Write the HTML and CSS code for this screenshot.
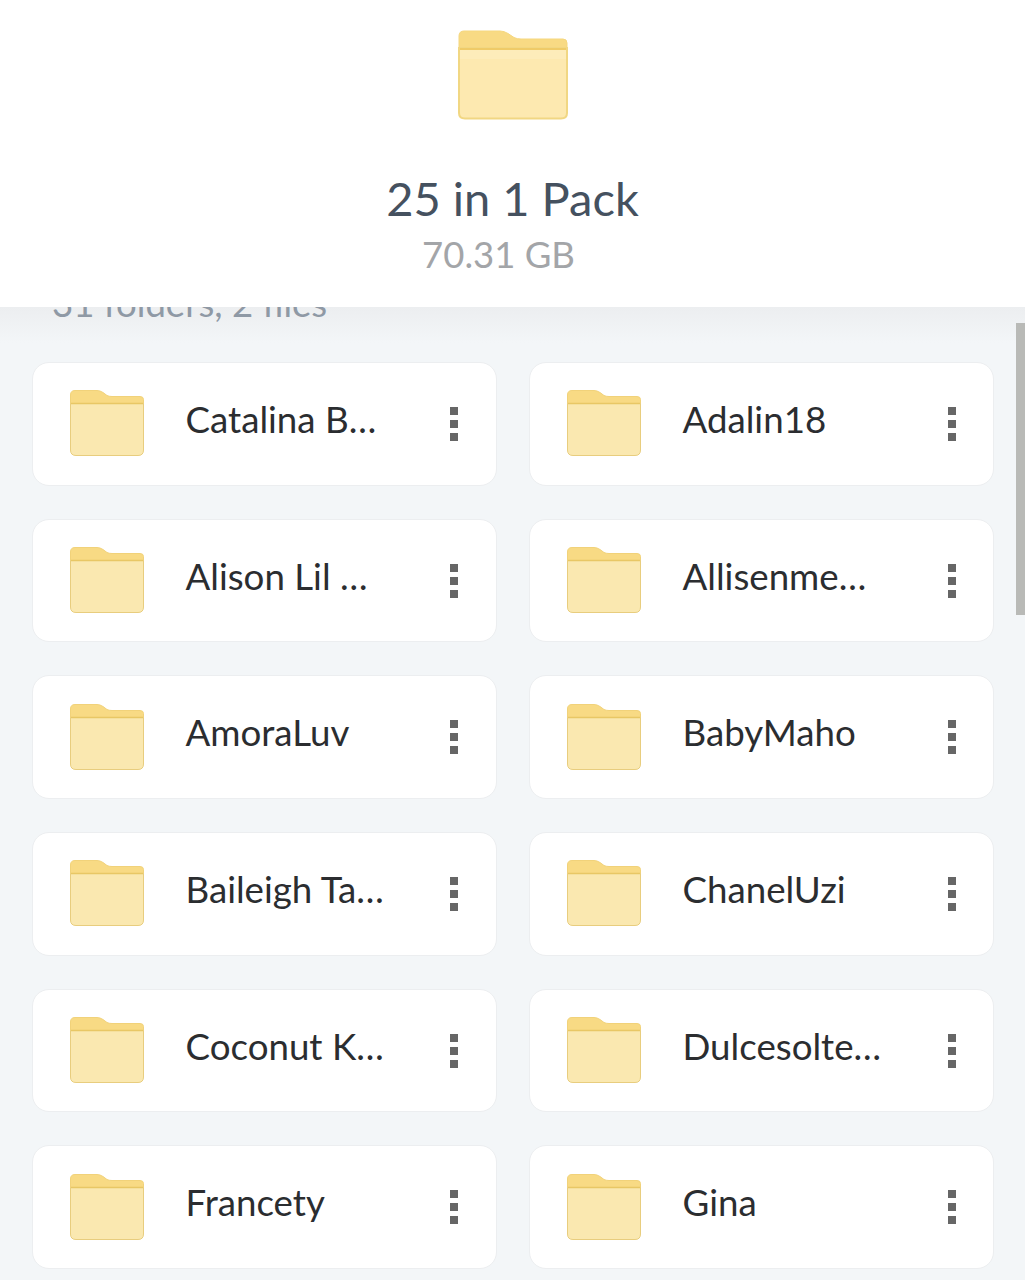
FILE: index.html
```html
<!DOCTYPE html>
<html lang="en">
<head>
<meta charset="utf-8">
<title>25 in 1 Pack</title>
<link rel="stylesheet" href="styles.css">
</head>
<body>
<svg class="defs" width="0" height="0" aria-hidden="true">
  <symbol id="folder" viewBox="0 0 74 66">
    <path d="M.5 11V5Q.5.5 5 .5H27Q30 .5 33 2.500L37 5.500Q39 6.500 42 6.500H70Q73.500 6.500 73.500 9.500V14H.5Z" fill="#f8da84" stroke="#f1d27a"/>
    <path d="M.5 13.500H73.500V60Q73.500 65.500 68 65.500H6Q.5 65.500 .5 60Z" fill="#fae8b0" stroke="#e8cd7e"/>
    <path d="M1 13.500H73" stroke="#e8c765" stroke-width="1.500"/>
  </symbol>
  <symbol id="folder-large" viewBox="0 0 110 90">
    <path d="M1 18V6Q1 1 6 1H42Q46 1 50 3.500L56 7.500Q59 9 63 9H105Q109 9 109 13V19H1Z" fill="#f8da84" stroke="#f5d77f"/>
    <path d="M1 18H109V83Q109 88.500 103 88.500H7Q1 88.500 1 83Z" fill="#fde9b0" stroke="#f1d783" stroke-width="2"/>
    <path d="M2 24.500H108" stroke="#fdecba" stroke-width="9"/>
    <path d="M2 19H108" stroke="#efcb68" stroke-width="2"/>
  </symbol>
</svg>
<header class="header">
  <svg class="header-folder"><use href="#folder-large"/></svg>
  <h1 class="title">25 in 1 Pack</h1>
  <p class="size">70.31 GB</p>
</header>
<main class="content">
  <p class="count">31 folders, 2 files</p>
  <div class="grid">
    <div class="card"><svg class="folder"><use href="#folder"/></svg><span class="name">Catalina B…</span><span class="kebab"><i></i><i></i><i></i></span></div>
    <div class="card"><svg class="folder"><use href="#folder"/></svg><span class="name">Adalin18</span><span class="kebab"><i></i><i></i><i></i></span></div>
    <div class="card"><svg class="folder"><use href="#folder"/></svg><span class="name">Alison Lil …</span><span class="kebab"><i></i><i></i><i></i></span></div>
    <div class="card"><svg class="folder"><use href="#folder"/></svg><span class="name">Allisenme…</span><span class="kebab"><i></i><i></i><i></i></span></div>
    <div class="card"><svg class="folder"><use href="#folder"/></svg><span class="name">AmoraLuv</span><span class="kebab"><i></i><i></i><i></i></span></div>
    <div class="card"><svg class="folder"><use href="#folder"/></svg><span class="name">BabyMaho</span><span class="kebab"><i></i><i></i><i></i></span></div>
    <div class="card"><svg class="folder"><use href="#folder"/></svg><span class="name">Baileigh Ta…</span><span class="kebab"><i></i><i></i><i></i></span></div>
    <div class="card"><svg class="folder"><use href="#folder"/></svg><span class="name">ChanelUzi</span><span class="kebab"><i></i><i></i><i></i></span></div>
    <div class="card"><svg class="folder"><use href="#folder"/></svg><span class="name">Coconut K…</span><span class="kebab"><i></i><i></i><i></i></span></div>
    <div class="card"><svg class="folder"><use href="#folder"/></svg><span class="name">Dulcesolte…</span><span class="kebab"><i></i><i></i><i></i></span></div>
    <div class="card"><svg class="folder"><use href="#folder"/></svg><span class="name">Francety</span><span class="kebab"><i></i><i></i><i></i></span></div>
    <div class="card"><svg class="folder"><use href="#folder"/></svg><span class="name">Gina</span><span class="kebab"><i></i><i></i><i></i></span></div>
  </div>
</main>
<div class="scrollbar"></div>
</body>
</html>
```
FILE: styles.css
```css
* { box-sizing: border-box; }
html, body { margin: 0; height: 1280px; overflow: hidden; }
body {
  position: relative;
  background: #f3f6f8;
  font-family: Lato, "Open Sans", sans-serif;
}
.defs { position: absolute; }
.header {
  position: relative;
  z-index: 2;
  height: 307px;
  background: #fff;
  display: flex;
  flex-direction: column;
  align-items: center;
  padding-top: 30px;
}
.header-folder { width: 110px; height: 90px; }
.title {
  margin: 50px 0 0;
  font-size: 47px;
  line-height: 56px;
  font-weight: 400;
  color: #45515f;
}
.size {
  margin: 1px 28px 0 0;
  font-size: 36.500px;
  line-height: 54px;
  color: #a3a5a8;
}
.content {
  position: relative;
  background: linear-gradient(#e7e8ea 0, #f3f6f8 62px);
  height: 973px;
  padding: 0 31px 0 32px;
}
.count {
  margin: -26px 0 0 20px;
  height: 81px;
  font-size: 36.600px;
  line-height: 44px;
  color: #8f99a5;
}
.grid {
  display: grid;
  grid-template-columns: 464.500px 465px;
  column-gap: 32.500px;
  grid-auto-rows: 123.700px;
  row-gap: 33px;
}
.card {
  display: flex;
  align-items: center;
  background: #fff;
  border: 1.500px solid #eceef0;
  border-radius: 17px;
  padding-left: 37px;
}
.folder { width: 74px; height: 66px; flex: none; margin-top: -1px; }
.name {
  flex: 1;
  margin-left: 41.500px;
  margin-top: -10px;
  font-size: 36.700px;
  line-height: 44px;
  color: #2b2d30;
  white-space: nowrap;
}
.kebab {
  display: flex;
  flex-direction: column;
  gap: 5px;
  margin-right: 37.500px;
}
.kebab i { width: 8px; height: 8px; background: #666; }
.scrollbar {
  position: absolute;
  top: 323px;
  right: 0;
  width: 9px;
  height: 292px;
  background: #b9bab7;
}
```
